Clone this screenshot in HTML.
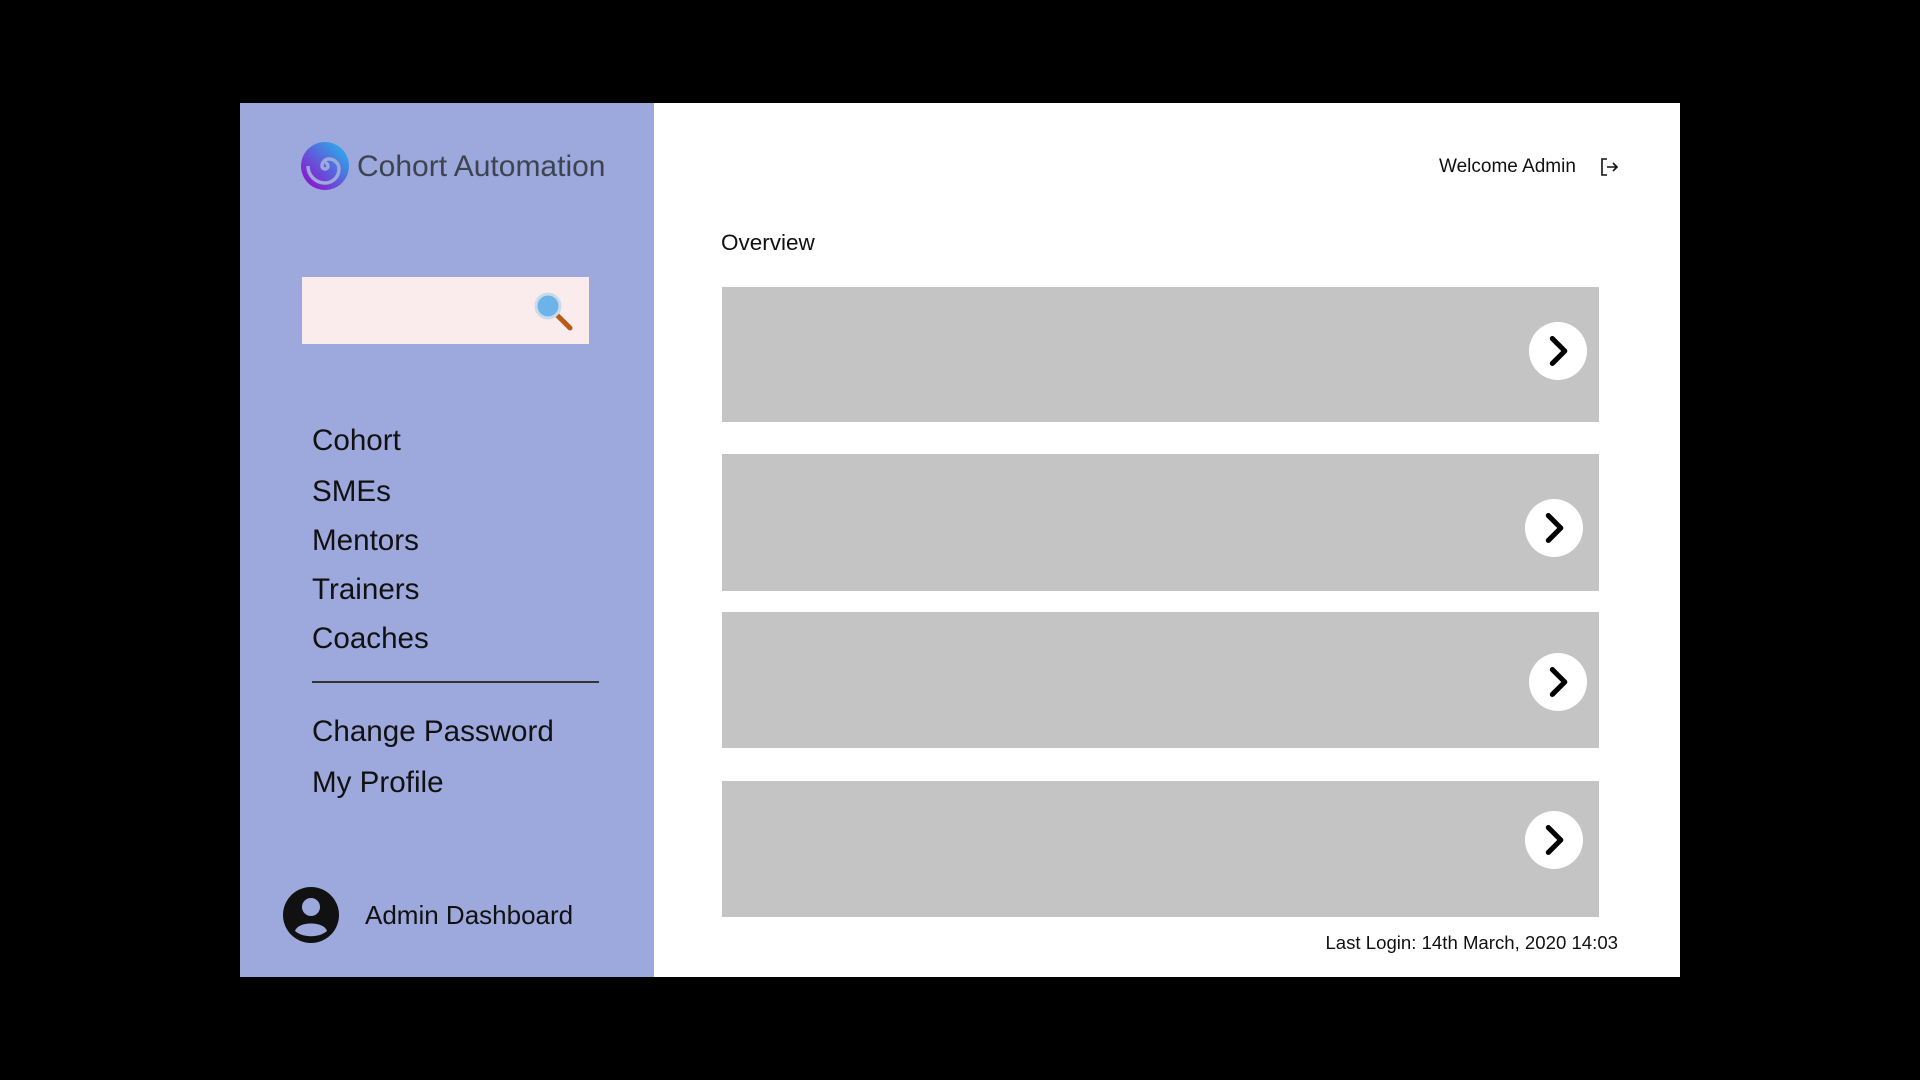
<!DOCTYPE html>
<html><head><meta charset="utf-8"><style>
*{margin:0;padding:0;box-sizing:border-box}
body{width:1920px;height:1080px;background:#000;position:relative;overflow:hidden;font-family:"Liberation Sans",sans-serif}
.a{position:absolute}
#side{left:240px;top:103px;width:414px;height:874px;background:#9da8dc}
#main{left:654px;top:103px;width:1026px;height:874px;background:#fff}
.nav{position:absolute;left:312px;font-size:29.6px;color:#111;line-height:1;transform:translateY(-50%)}
.card{position:absolute;left:722px;width:877px;background:#c4c4c4}
.circ{position:absolute;width:58px;height:58px;border-radius:50%;background:#fff;display:flex;align-items:center;justify-content:center}
</style></head><body>
<div class="a" id="side"></div>
<div class="a" id="main"></div>
<svg class="a" style="left:300px;top:141px" width="50" height="50" viewBox="0 0 50 50">
<defs><linearGradient id="g" x1="0" y1="1" x2="1" y2="0"><stop offset="0" stop-color="#9a00c8"/><stop offset="1" stop-color="#1ec0ee"/></linearGradient></defs>
<circle cx="25" cy="25" r="24" fill="url(#g)"/>
<path d="M25 25 m0 -3 a3 3 0 1 1 -3 3 a7 7 0 0 1 7 -7 a10 10 0 0 1 10 10 a14 14 0 0 1 -14 14 a17 17 0 0 1 -17 -17" fill="none" stroke="#9da8dc" stroke-width="3.5"/>
</svg>
<div class="a" style="left:357px;top:150px;font-size:30px;color:#3d4450;line-height:34px">Cohort Automation</div>
<div class="a" style="left:302px;top:277px;width:287px;height:67px;background:#faeced"></div>
<svg class="a" style="left:532px;top:290px" width="44" height="44" viewBox="0 0 44 44">
<line x1="22" y1="22" x2="38" y2="38" stroke="#b85c1a" stroke-width="5" stroke-linecap="round"/>
<circle cx="16" cy="16" r="12" fill="#6db3ea" stroke="#c7dbe8" stroke-width="3"/>
</svg>
<div class="nav" style="top:441px">Cohort</div>
<div class="nav" style="top:492px">SMEs</div>
<div class="nav" style="top:541px">Mentors</div>
<div class="nav" style="top:590px">Trainers</div>
<div class="nav" style="top:639px">Coaches</div>
<div class="a" style="left:312px;top:681px;width:287px;height:2px;background:#333"></div>
<div class="nav" style="top:732px">Change Password</div>
<div class="nav" style="top:783px">My Profile</div>
<svg class="a" style="left:283px;top:887px" width="56" height="56" viewBox="0 0 56 56">
<circle cx="28" cy="28" r="28" fill="#111"/>
<circle cx="28" cy="20" r="9" fill="#9da8dc"/>
<path d="M12 44 c3 -10 29 -10 32 0 c-8 7 -24 7 -32 0z" fill="#9da8dc"/>
</svg>
<div class="a" style="left:365px;top:901px;font-size:26px;color:#111;line-height:29px">Admin Dashboard</div>
<div class="a" style="left:1439px;top:156px;font-size:19px;color:#111;line-height:22px">Welcome Admin</div>
<svg class="a" style="left:1599px;top:157px" width="20" height="20" viewBox="0 0 20 20" fill="none" stroke="#111" stroke-width="1.6">
<path d="M8 2H3v16h5M8 10h10M14 6l4 4-4 4"/></svg>
<div class="a" style="left:721px;top:230px;font-size:22.5px;color:#111;line-height:25px">Overview</div>
<div class="card" style="top:287px;height:135px"></div>
<div class="card" style="top:454px;height:137px"></div>
<div class="card" style="top:612px;height:136px"></div>
<div class="card" style="top:781px;height:136px"></div>
<div class="circ" style="left:1529px;top:322px"><svg width="34" height="34" viewBox="0 0 30 30"><path d="M10 4l11 11-11 11" fill="none" stroke="#000" stroke-width="4.5" stroke-linecap="round" stroke-linejoin="round"/></svg></div>
<div class="circ" style="left:1525px;top:499px"><svg width="34" height="34" viewBox="0 0 30 30"><path d="M10 4l11 11-11 11" fill="none" stroke="#000" stroke-width="4.5" stroke-linecap="round" stroke-linejoin="round"/></svg></div>
<div class="circ" style="left:1529px;top:653px"><svg width="34" height="34" viewBox="0 0 30 30"><path d="M10 4l11 11-11 11" fill="none" stroke="#000" stroke-width="4.5" stroke-linecap="round" stroke-linejoin="round"/></svg></div>
<div class="circ" style="left:1525px;top:811px"><svg width="34" height="34" viewBox="0 0 30 30"><path d="M10 4l11 11-11 11" fill="none" stroke="#000" stroke-width="4.5" stroke-linecap="round" stroke-linejoin="round"/></svg></div>
<div class="a" style="right:302px;top:932px;font-size:18.6px;color:#111;line-height:21px">Last Login: 14th March, 2020 14:03</div>
</body></html>
